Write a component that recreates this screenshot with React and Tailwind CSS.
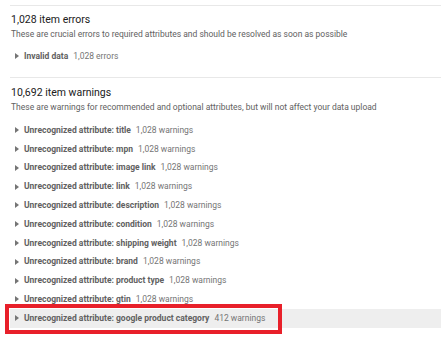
const warnings = [
  ["title", "1,028 warnings"],
  ["mpn", "1,028 warnings"],
  ["image link", "1,028 warnings"],
  ["link", "1,028 warnings"],
  ["description", "1,028 warnings"],
  ["condition", "1,028 warnings"],
  ["shipping weight", "1,028 warnings"],
  ["brand", "1,028 warnings"],
  ["product type", "1,028 warnings"],
  ["gtin", "1,028 warnings"],
];

function Row({ label, count, highlight }) {
  return (
    <div className={"relative flex h-[18.8px] items-center pl-[5px] " + (highlight ? "bg-[#eeeeee]" : "")}>
      <span className="mr-[5px] inline-block h-0 w-0 border-y-[3px] border-l-[4px] border-y-transparent border-l-[#757575]" />
      <span className="font-bold text-[#616161]">{label}</span>
      <span className="ml-[5px] text-[#757575]">{count}</span>
      {highlight && (
        <div className="pointer-events-none absolute -left-[5px] -top-[5px] h-[30px] w-[277px] border-4 border-[#e8202a]" />
      )}
    </div>
  );
}

export default function App() {
  return (
    <div className="h-[343px] w-[441px] overflow-hidden bg-white pl-[10px] pt-[5px] text-[8.5px] [font-family:Roboto,'Liberation_Sans',sans-serif]">
      <section className="border-t border-[#e8e8e8]">
        <h2 className="mt-[7px] pl-px text-[10.5px] leading-[14px] text-[#212121]">1,028 item errors</h2>
        <p className="pl-px leading-[14px] text-[#616161]">
          These are crucial errors to required attributes and should be resolved as soon as possible
        </p>
        <div className="mt-[6px] mb-[11px]">
          <Row label="Invalid data" count="1,028 errors" />
        </div>
      </section>

      <section className="border-t border-[#e8e8e8]">
        <h2 className="mt-[8px] pl-px text-[10.5px] leading-[14px] text-[#212121]">10,692 item warnings</h2>
        <p className="pl-px leading-[14px] text-[#616161]">
          These are warnings for recommended and optional attributes, but will not affect your data upload
        </p>
        <div className="mt-[7px] flex flex-col">
          {warnings.map(([name, count]) => (
            <Row key={name} label={"Unrecognized attribute: " + name} count={count} />
          ))}
          <Row label="Unrecognized attribute: google product category" count="412 warnings" highlight />
        </div>
      </section>
    </div>
  );
}
